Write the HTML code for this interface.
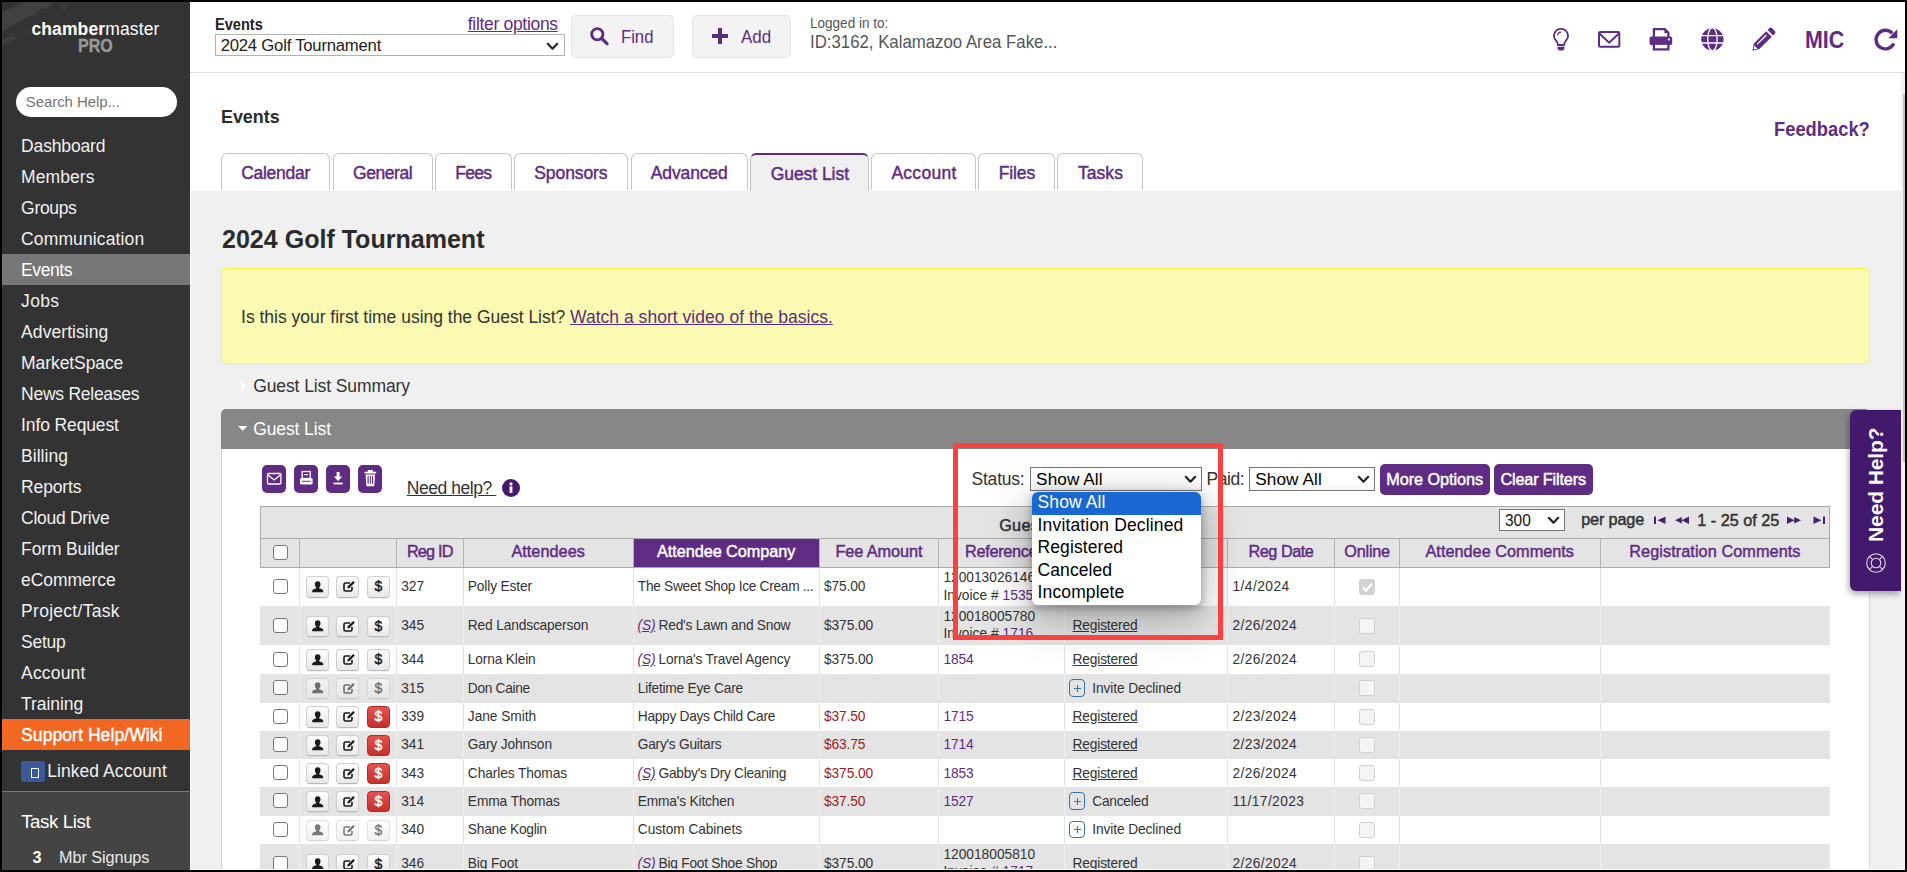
<!DOCTYPE html>
<html lang="en">
<head>
<meta charset="utf-8">
<title>Events - Guest List</title>
<style>
*{box-sizing:border-box;margin:0;padding:0}
html,body{width:1907px;height:872px;overflow:hidden;background:#000;font-family:"Liberation Sans",sans-serif;color:#333}
#frame{position:absolute;left:2px;top:2px;width:1903px;height:868px;background:#f0f0f0;overflow:hidden}
.t{position:absolute;white-space:nowrap}
a{color:#5f2c83}
u{text-decoration:underline}
svg{position:absolute;overflow:visible}
</style>
</head>
<body>
<div id="frame">

<!-- sidebar -->
<div id="side"><div style="position:absolute;left:0px;top:0px;width:188px;height:868px;background:#333"></div>
<svg style="left:0;top:0" width="188" height="80" viewBox="0 0 188 80"><g fill="#414141"><path d="M22 0h31l-9 7l-4-1l-7 7l-5 1l-28 15v-19l14-6z"/><path d="M0 37l11-3l3 3l-14 6z" opacity=".8"/><path d="M60 3l4-1l0 5l-2 3l-2-4z" opacity=".6"/><path d="M53 13l4-2l-3 3z M22 31l5-3l-4 4z" opacity=".5"/></g></svg>
<span class="t" style="left:29.4px;top:16.0px;font-size:17.5px;line-height:22px;color:#fff;letter-spacing:0.125px;"><b>chamber</b>master</span>
<span class="t" style="left:76.2px;top:33.0px;font-size:18px;line-height:22px;font-weight:bold;color:#999;transform:scaleX(0.8920);transform-origin:0 0;-webkit-text-stroke:0.35px #999;">PRO</span>
<div style="position:absolute;left:13.5px;top:84.6px;width:161px;height:30.8px;background:#fff;border-radius:16px"></div>
<span class="t" style="left:23.8px;top:90.0px;font-size:15px;line-height:19px;color:#757575;letter-spacing:-0.078px;">Search Help...</span>
<span class="t" style="left:19.1px;top:133.0px;font-size:17.5px;line-height:22px;color:#f0f0f0;letter-spacing:-0.156px;">Dashboard</span>
<span class="t" style="left:19.1px;top:164.0px;font-size:17.5px;line-height:22px;color:#f0f0f0;letter-spacing:0.071px;">Members</span>
<span class="t" style="left:19.1px;top:195.0px;font-size:17.5px;line-height:22px;color:#f0f0f0;letter-spacing:-0.326px;">Groups</span>
<span class="t" style="left:19.1px;top:226.0px;font-size:17.5px;line-height:22px;color:#f0f0f0;letter-spacing:0.122px;">Communication</span>
<div style="position:absolute;left:0px;top:252px;width:188px;height:31px;background:#777"></div>
<span class="t" style="left:19.1px;top:257.0px;font-size:17.5px;line-height:22px;color:#fff;letter-spacing:-0.418px;">Events</span>
<span class="t" style="left:19.1px;top:288.0px;font-size:17.5px;line-height:22px;color:#f0f0f0;letter-spacing:0.323px;">Jobs</span>
<span class="t" style="left:19.1px;top:319.0px;font-size:17.5px;line-height:22px;color:#f0f0f0;letter-spacing:0.069px;">Advertising</span>
<span class="t" style="left:19.1px;top:350.0px;font-size:17.5px;line-height:22px;color:#f0f0f0;letter-spacing:-0.087px;">MarketSpace</span>
<span class="t" style="left:19.1px;top:381.0px;font-size:17.5px;line-height:22px;color:#f0f0f0;letter-spacing:-0.262px;">News Releases</span>
<span class="t" style="left:19.1px;top:412.0px;font-size:17.5px;line-height:22px;color:#f0f0f0;letter-spacing:-0.125px;">Info Request</span>
<span class="t" style="left:19.1px;top:443.0px;font-size:17.5px;line-height:22px;color:#f0f0f0;letter-spacing:0.015px;">Billing</span>
<span class="t" style="left:19.1px;top:474.0px;font-size:17.5px;line-height:22px;color:#f0f0f0;letter-spacing:-0.151px;">Reports</span>
<span class="t" style="left:19.1px;top:505.0px;font-size:17.5px;line-height:22px;color:#f0f0f0;letter-spacing:-0.289px;">Cloud Drive</span>
<span class="t" style="left:19.1px;top:536.0px;font-size:17.5px;line-height:22px;color:#f0f0f0;letter-spacing:-0.145px;">Form Builder</span>
<span class="t" style="left:19.1px;top:567.0px;font-size:17.5px;line-height:22px;color:#f0f0f0;letter-spacing:-0.096px;">eCommerce</span>
<span class="t" style="left:19.1px;top:598.0px;font-size:17.5px;line-height:22px;color:#f0f0f0;letter-spacing:0.277px;">Project/Task</span>
<span class="t" style="left:19.1px;top:629.0px;font-size:17.5px;line-height:22px;color:#f0f0f0;letter-spacing:-0.252px;">Setup</span>
<span class="t" style="left:19.1px;top:660.0px;font-size:17.5px;line-height:22px;color:#f0f0f0;letter-spacing:0.164px;">Account</span>
<span class="t" style="left:19.1px;top:691.0px;font-size:17.5px;line-height:22px;color:#f0f0f0;letter-spacing:-0.064px;">Training</span>
<div style="position:absolute;left:0px;top:717px;width:188px;height:31px;background:#f26722"></div>
<span class="t" style="left:19.1px;top:722.0px;font-size:17.5px;line-height:22px;-webkit-text-stroke:0.45px;color:#fff;letter-spacing:0.081px;">Support Help/Wiki</span>
<div style="position:absolute;left:19px;top:758.8px;width:24px;height:20.8px;background:#3b5998;border-radius:3px"></div>
<div style="position:absolute;left:29px;top:766px;width:8.4px;height:9.6px;border:1px solid #fff"></div>
<span class="t" style="left:45.2px;top:758.0px;font-size:17.5px;line-height:22px;color:#f0f0f0;letter-spacing:0.066px;">Linked Account</span>
<div style="position:absolute;left:0px;top:789px;width:188px;height:79px;background:#444;border-top:1px solid #7a7a7a"></div>
<span class="t" style="left:19.2px;top:808.0px;font-size:18.75px;line-height:23px;color:#fff;letter-spacing:-0.442px;">Task List</span>
<span class="t" style="left:30.6px;top:845.0px;font-size:16.25px;line-height:20px;font-weight:bold;color:#fff;letter-spacing:0.553px;">3</span>
<span class="t" style="left:57.0px;top:845.0px;font-size:16.25px;line-height:20px;color:#e8e8e8;letter-spacing:-0.079px;">Mbr Signups</span></div>

<!-- top bar -->
<div id="top"><div style="position:absolute;left:188px;top:0px;width:1715px;height:71px;background:#fff;border-bottom:1px solid #ddd"></div>
<span class="t" style="left:213.0px;top:12.0px;font-size:16.25px;line-height:20px;font-weight:bold;color:#222;transform:scaleX(0.8969);transform-origin:0 0;">Events</span>
<span class="t" style="left:465.8px;top:11.0px;font-size:17.5px;line-height:22px;color:#5f2c83;letter-spacing:-0.316px;"><u>filter options</u></span>
<div style="position:absolute;left:213px;top:32px;width:350px;height:22px;background:#fff;border:1px solid #b2b2b2"></div>
<span class="t" style="left:218.7px;top:33.0px;font-size:16.67px;line-height:21px;color:#222;letter-spacing:-0.206px;">2024 Golf Tournament</span>
<svg style="left:545.3px;top:40.5px" width="11" height="6.5" viewBox="0 0 11 6.5"><path d="M0.8 0.8L5.5 5.7L10.2 0.8" fill="none" stroke="#222" stroke-width="2.2" stroke-linecap="round" stroke-linejoin="round"/></svg>
<div style="position:absolute;left:569.2px;top:13px;width:102.6px;height:42.6px;background:#f3f3f3;border:1px solid #e5e5e5;border-radius:5px"></div>
<svg style="left:588px;top:25px" width="19" height="18" viewBox="0 0 19 18"><circle cx="7.3" cy="7.3" r="5.6" fill="none" stroke="#5f2c83" stroke-width="2.8"/><path d="M11.6 11.4L17 16.6" stroke="#5f2c83" stroke-width="3.4" stroke-linecap="round"/></svg>
<span class="t" style="left:619.3px;top:24.0px;font-size:18px;line-height:22px;color:#5f2c83;transform:scaleX(0.9253);transform-origin:0 0;">Find</span>
<div style="position:absolute;left:690.3px;top:13px;width:98.5px;height:42.6px;background:#f3f3f3;border:1px solid #e5e5e5;border-radius:5px"></div>
<svg style="left:710.2px;top:26px" width="16" height="16" viewBox="0 0 16 16"><path d="M8 0v16M0 8h16" stroke="#5f2c83" stroke-width="4" fill="none"/></svg>
<span class="t" style="left:738.6px;top:24.0px;font-size:18px;line-height:22px;color:#5f2c83;transform:scaleX(0.9428);transform-origin:0 0;">Add</span>
<span class="t" style="left:808.3px;top:11.0px;font-size:15px;line-height:19px;color:#555;transform:scaleX(0.9026);transform-origin:0 0;">Logged in to:</span>
<span class="t" style="left:808.3px;top:28.0px;font-size:18.75px;line-height:23px;color:#555;transform:scaleX(0.8957);transform-origin:0 0;">ID:3162, Kalamazoo Area Fake...</span>
<svg style="left:1550px;top:25px" width="18" height="24" viewBox="0 0 18 24"><path d="M9 1.900a6.900 6.900 0 0 0-4.900 11.800c1.100 1.200 1.700 2.600 1.800 4.300h6.200c.1-1.700.7-3.100 1.800-4.300A6.900 6.900 0 0 0 9 1.900z" fill="none" stroke="#5f2c83" stroke-width="1.800"/><path d="M5.500 19.800h7v1.100c0 1.500-1.100 2.600-2.500 2.600h-2c-1.400 0-2.500-1.100-2.500-2.600z" fill="#5f2c83"/><path d="M5.700 8.600A3.500 3.500 0 0 1 9 5.100" fill="none" stroke="#5f2c83" stroke-width="1.100"/></svg>
<svg style="left:1596px;top:29.1px" width="23" height="17" viewBox="0 0 23 17"><rect x="1" y="1" width="20.300" height="14.700" rx="1.300" fill="none" stroke="#5f2c83" stroke-width="2"/><path d="M1.400 2.600L11.150 11.700L20.900 2.600" fill="none" stroke="#5f2c83" stroke-width="2"/></svg>
<svg style="left:1647px;top:25px" width="24" height="24" viewBox="0 0 24 24"><path d="M4.900 10.500V2.100h10.900l3.600 3.600v4.800" fill="none" stroke="#5f2c83" stroke-width="2.300"/><path d="M15.400 1.500v4.600h4.600z" fill="#5f2c83"/><rect x="0.600" y="9.400" width="22.600" height="8.600" rx="1.700" fill="#5f2c83"/><rect x="4.900" y="16.700" width="14.500" height="5.700" fill="#fff" stroke="#5f2c83" stroke-width="2.300"/><circle cx="19.900" cy="12.400" r="1.050" fill="#fff"/></svg>
<svg style="left:1699px;top:26px" width="23" height="23" viewBox="0 0 23 23"><circle cx="11.400" cy="11.300" r="11.150" fill="#5f2c83"/><g fill="none" stroke="#fff" stroke-width="1.300"><ellipse cx="11.400" cy="11.300" rx="4.700" ry="11.600"/><path d="M0 7.700h23M0 15h23"/></g></svg>
<svg style="left:1749.6px;top:25.4px" width="24" height="24" viewBox="0 0 24 24"><path d="M17.300 1.200a2 2 0 0 1 2.800 0l2.700 2.700a2 2 0 0 1 0 2.800l-1.700 1.700l-5.500-5.500z" fill="#5f2c83"/><path d="M14.200 4.300l5.500 5.500l-12.300 12.300l-7 1.600l1.500-7.100z" fill="#5f2c83"/><path d="M2.300 18.600l3.200 3.100l-3.800.8z" fill="#fff"/><path d="M5 17.400l9.400-9.400" stroke="#fff" stroke-width="1.200"/></svg>
<span class="t" style="left:1803.4px;top:24.0px;font-size:23.2px;line-height:29px;font-weight:bold;color:#5f2c83;transform:scaleX(0.9244);transform-origin:0 0;">MIC</span>
<svg style="left:1872px;top:26.4px" width="24" height="23" viewBox="0 0 24 23"><path d="M19.800 15.600A9.300 9.300 0 1 1 18.300 5.300" fill="none" stroke="#5f2c83" stroke-width="3.400"/><path d="M23.300 1.200v9h-9z" fill="#5f2c83"/></svg></div>

<!-- main -->
<div id="main"><div style="position:absolute;left:188px;top:71px;width:1711px;height:118px;background:#fff"></div>
<span class="t" style="left:219.4px;top:103.0px;font-size:19.25px;line-height:24px;font-weight:bold;color:#2b2b2b;transform:scaleX(0.9281);transform-origin:0 0;">Events</span>
<span class="t" style="left:1771.5px;top:115.0px;font-size:19.6px;line-height:24px;font-weight:bold;color:#5f2c83;transform:scaleX(0.9358);transform-origin:0 0;">Feedback?</span>
<div style="position:absolute;left:219px;top:151px;width:109px;height:37px;background:#fff;border:1px solid #c6c6c6;border-bottom:none;border-radius:6px 6px 0 0"></div>
<span class="t" style="left:239.2px;top:160.0px;font-size:17.5px;line-height:22px;-webkit-text-stroke:0.45px;color:#5f2c83;letter-spacing:-0.284px;">Calendar</span>
<div style="position:absolute;left:331px;top:151px;width:100px;height:37px;background:#fff;border:1px solid #c6c6c6;border-bottom:none;border-radius:6px 6px 0 0"></div>
<span class="t" style="left:351.0px;top:160.0px;font-size:17.5px;line-height:22px;-webkit-text-stroke:0.45px;color:#5f2c83;letter-spacing:-0.441px;">General</span>
<div style="position:absolute;left:433px;top:151px;width:77px;height:37px;background:#fff;border:1px solid #c6c6c6;border-bottom:none;border-radius:6px 6px 0 0"></div>
<span class="t" style="left:453.2px;top:160.0px;font-size:17.5px;line-height:22px;-webkit-text-stroke:0.45px;color:#5f2c83;letter-spacing:-0.688px;">Fees</span>
<div style="position:absolute;left:512px;top:151px;width:114px;height:37px;background:#fff;border:1px solid #c6c6c6;border-bottom:none;border-radius:6px 6px 0 0"></div>
<span class="t" style="left:532.3px;top:160.0px;font-size:17.5px;line-height:22px;-webkit-text-stroke:0.45px;color:#5f2c83;letter-spacing:-0.098px;">Sponsors</span>
<div style="position:absolute;left:629px;top:151px;width:117px;height:37px;background:#fff;border:1px solid #c6c6c6;border-bottom:none;border-radius:6px 6px 0 0"></div>
<span class="t" style="left:648.8px;top:160.0px;font-size:17.5px;line-height:22px;-webkit-text-stroke:0.45px;color:#5f2c83;letter-spacing:-0.139px;">Advanced</span>
<div style="position:absolute;left:748px;top:151px;width:119px;height:38px;background:#f0f0f0;border:1px solid #c4c4c4;border-top:2px solid #5f2c83;border-bottom:none;border-radius:6px 6px 0 0"></div>
<span class="t" style="left:768.7px;top:161.0px;font-size:17.5px;line-height:22px;-webkit-text-stroke:0.45px;color:#5f2c83;letter-spacing:-0.052px;">Guest List</span>
<div style="position:absolute;left:869px;top:151px;width:105px;height:37px;background:#fff;border:1px solid #c6c6c6;border-bottom:none;border-radius:6px 6px 0 0"></div>
<span class="t" style="left:889.4px;top:160.0px;font-size:17.5px;line-height:22px;-webkit-text-stroke:0.45px;color:#5f2c83;letter-spacing:0.272px;">Account</span>
<div style="position:absolute;left:976px;top:151px;width:77px;height:37px;background:#fff;border:1px solid #c6c6c6;border-bottom:none;border-radius:6px 6px 0 0"></div>
<span class="t" style="left:996.7px;top:160.0px;font-size:17.5px;line-height:22px;-webkit-text-stroke:0.45px;color:#5f2c83;letter-spacing:-0.101px;">Files</span>
<div style="position:absolute;left:1055px;top:151px;width:86px;height:37px;background:#fff;border:1px solid #c6c6c6;border-bottom:none;border-radius:6px 6px 0 0"></div>
<span class="t" style="left:1075.9px;top:160.0px;font-size:17.5px;line-height:22px;-webkit-text-stroke:0.45px;color:#5f2c83;letter-spacing:0.081px;">Tasks</span>
<span class="t" style="left:219.6px;top:221.0px;font-size:26.25px;line-height:33px;font-weight:bold;color:#2b2b2b;transform:scaleX(0.9538);transform-origin:0 0;">2024 Golf Tournament</span>
<div style="position:absolute;left:219px;top:266px;width:1649px;height:96px;background:#fafab2;border:1px solid #f7f748;border-radius:5px"></div>
<span class="t" style="left:239.1px;top:304.0px;font-size:17.5px;line-height:22px;letter-spacing:-0.015px;">Is this your first time using the Guest List?</span>
<span class="t" style="left:568.0px;top:304.0px;font-size:17.5px;line-height:22px;color:#5f2c83;letter-spacing:0.027px;"><u>Watch a short video of the basics.</u></span>
<svg style="left:239.4px;top:379px" width="6" height="10" viewBox="0 0 6 10"><path d="M0 0l5 5l-5 5z" fill="#fff"/></svg>
<span class="t" style="left:251.2px;top:373.0px;font-size:17.5px;line-height:22px;letter-spacing:-0.099px;">Guest List Summary</span>
<div style="position:absolute;left:219px;top:407px;width:1649px;height:40px;background:#878787;border-radius:5px 5px 0 0"></div>
<div style="position:absolute;left:219px;top:446.8px;width:1649px;height:423.2px;background:#fff;border-right:1px solid #d8d8d8;border-left:1px solid #d0d0d0"></div>
<svg style="left:235.8px;top:423.8px" width="10" height="5" viewBox="0 0 10 5"><path d="M0 0h9.400l-4.700 4.800z" fill="#fff"/></svg>
<span class="t" style="left:251.2px;top:416.0px;font-size:17.5px;line-height:22px;color:#fff;letter-spacing:-0.105px;">Guest List</span>
<div style="position:absolute;left:260px;top:463px;width:24.2px;height:28px;background:#5f2c83;border-radius:5px"><svg style="left:0;top:0" width="24" height="28" viewBox="0 0 24 28"><rect x="5.500" y="8.500" width="13.400" height="10.500" rx="1" fill="none" stroke="#fff" stroke-width="1.300"/><path d="M6 10l6.200 5l6.200-5" fill="none" stroke="#fff" stroke-width="1.300"/></svg></div>
<div style="position:absolute;left:292.2px;top:463px;width:24.2px;height:28px;background:#5f2c83;border-radius:5px"><svg style="left:0;top:0" width="24" height="28" viewBox="0 0 24 28"><rect x="8.200" y="6.500" width="8" height="7" fill="none" stroke="#fff" stroke-width="1.300"/><path d="M10.300 9.600h3.800" stroke="#fff" stroke-width="1.200"/><rect x="6" y="13" width="12.600" height="6.600" rx="1.500" fill="#fff"/><path d="M8 16.300h8.600" stroke="#5f2c83" stroke-width="1"/></svg></div>
<div style="position:absolute;left:324px;top:463px;width:24.2px;height:28px;background:#5f2c83;border-radius:5px"><svg style="left:0;top:0" width="24" height="28" viewBox="0 0 24 28"><path d="M10.600 7h3v4.600h2.800l-4.300 4.500l-4.300-4.500h2.800z" fill="#fff"/><rect x="7.500" y="17.600" width="9.200" height="1.800" fill="#fff"/></svg></div>
<div style="position:absolute;left:356.2px;top:463px;width:24.2px;height:28px;background:#5f2c83;border-radius:5px"><svg style="left:0;top:0" width="24" height="28" viewBox="0 0 24 28"><path d="M6.500 6.800h11.600v1.600h-11.600zM9.800 5h5v1.800h-5z" fill="#fff"/><path d="M7.600 9.600h9.400l-.7 10.800a1 1 0 0 1-1 .9h-6a1 1 0 0 1-1-.9z" fill="#fff"/><path d="M10.100 11v7.800M12.300 11v7.800M14.500 11v7.800" stroke="#5f2c83" stroke-width="1.100"/></svg></div>
<span class="t" style="left:404.7px;top:475.0px;font-size:17.5px;line-height:22px;letter-spacing:-0.428px;"><u>Need help?&nbsp;</u></span>
<svg style="left:500.1px;top:476.8px" width="18" height="18" viewBox="0 0 18 18"><circle cx="9" cy="9" r="9" fill="#471a6e"/><rect x="7.600" y="7.300" width="2.800" height="6.600" fill="#fff"/><circle cx="9" cy="4.800" r="1.600" fill="#fff"/></svg>
<span class="t" style="left:969.5px;top:466.0px;font-size:17.5px;line-height:22px;letter-spacing:-0.213px;">Status:</span>
<div style="position:absolute;left:1028.2px;top:465.3px;width:171.5px;height:23.5px;background:linear-gradient(#fff 60%,#f6f6f6);border:1px solid #767676"></div>
<span class="t" style="left:1034.1px;top:466.0px;font-size:17.2px;line-height:22px;color:#000;letter-spacing:0.077px;">Show All</span>
<svg style="left:1182.5px;top:474px" width="11" height="6.5" viewBox="0 0 11 6.5"><path d="M0.8 0.8L5.5 5.7L10.2 0.8" fill="none" stroke="#222" stroke-width="2.2" stroke-linecap="round" stroke-linejoin="round"/></svg>
<span class="t" style="left:1204.5px;top:466.0px;font-size:17.5px;line-height:22px;letter-spacing:-0.465px;">Paid:</span>
<div style="position:absolute;left:1247.1px;top:465.3px;width:125.6px;height:23.5px;background:linear-gradient(#fff 60%,#f6f6f6);border:1px solid #767676"></div>
<span class="t" style="left:1253.3px;top:466.0px;font-size:17.2px;line-height:22px;color:#000;letter-spacing:0.077px;">Show All</span>
<svg style="left:1355.5px;top:474px" width="11" height="6.5" viewBox="0 0 11 6.5"><path d="M0.8 0.8L5.5 5.7L10.2 0.8" fill="none" stroke="#222" stroke-width="2.2" stroke-linecap="round" stroke-linejoin="round"/></svg>
<div style="position:absolute;left:1377.9px;top:462px;width:110px;height:30.8px;background:#5f2c83;border-radius:5px"></div>
<span class="t" style="left:1384.2px;top:467.0px;font-size:16.25px;line-height:20px;-webkit-text-stroke:0.45px;color:#fff;letter-spacing:-0.048px;">More Options</span>
<div style="position:absolute;left:1492.1px;top:462px;width:98.6px;height:30.8px;background:#5f2c83;border-radius:5px"></div>
<span class="t" style="left:1498.4px;top:467.0px;font-size:16.25px;line-height:20px;-webkit-text-stroke:0.45px;color:#fff;letter-spacing:-0.160px;">Clear Filters</span></div>

<!-- table -->
<div id="grid"><div style="position:absolute;left:258.2px;top:504px;width:1569.4px;height:32.4px;background:#e4e4e4;border:1px solid #aaa;border-bottom:none"></div>
<span class="t" style="left:997.2px;top:513.0px;font-size:16.25px;line-height:20px;-webkit-text-stroke:0.45px;letter-spacing:0.277px;">Guest List</span>
<div style="position:absolute;left:1497px;top:507px;width:66px;height:22px;background:#fff;border:1px solid #767676"></div>
<span class="t" style="left:1503.2px;top:508.0px;font-size:16.67px;line-height:21px;color:#111;transform:scaleX(0.9282);transform-origin:0 0;">300</span>
<svg style="left:1545.6px;top:515.2px" width="11" height="6.5" viewBox="0 0 11 6.5"><path d="M0.8 0.8L5.5 5.7L10.2 0.8" fill="none" stroke="#222" stroke-width="2.2" stroke-linecap="round" stroke-linejoin="round"/></svg>
<span class="t" style="left:1579.2px;top:507.0px;font-size:16.25px;line-height:20px;-webkit-text-stroke:0.45px;letter-spacing:-0.154px;">per page</span>
<svg style="left:1651.6px;top:513.6px" width="12" height="9" viewBox="0 0 12 9"><rect x="0" y="0.500" width="2" height="7.500" fill="#48206e"/><path d="M11.500 0.500v7.500L3.500 4.250z" fill="#48206e"/></svg>
<svg style="left:1673.2px;top:513.6px" width="14" height="9" viewBox="0 0 14 9"><path d="M6.800 1v6.500L0 4.250zM14 0.500v7.500L6.500 4.250z" fill="#48206e"/></svg>
<span class="t" style="left:1695.3px;top:508.0px;font-size:16.25px;line-height:20px;-webkit-text-stroke:0.45px;letter-spacing:-0.019px;">1 - 25 of 25</span>
<svg style="left:1785.4px;top:513.6px" width="14" height="9" viewBox="0 0 14 9"><path d="M7.200 1v6.500L14 4.250zM0 0.500v7.500L7.500 4.250z" fill="#48206e"/></svg>
<svg style="left:1810.5px;top:513.6px" width="12" height="9" viewBox="0 0 12 9"><rect x="10" y="0.500" width="2" height="7.500" fill="#48206e"/><path d="M0.500 0.500v7.500L8.500 4.250z" fill="#48206e"/></svg>
<div style="position:absolute;left:258.2px;top:536.4px;width:1569.4px;height:29.2px;background:#e4e4e4;border:1px solid #aaa"></div>
<div style="position:absolute;left:296.8px;top:537px;width:1px;height:28px;background:#b4b4b4"></div>
<div style="position:absolute;left:393.9px;top:537px;width:1px;height:28px;background:#b4b4b4"></div>
<div style="position:absolute;left:460.9px;top:537px;width:1px;height:28px;background:#b4b4b4"></div>
<div style="position:absolute;left:631.3px;top:537px;width:1px;height:28px;background:#b4b4b4"></div>
<div style="position:absolute;left:816.6px;top:537px;width:1px;height:28px;background:#b4b4b4"></div>
<div style="position:absolute;left:936px;top:537px;width:1px;height:28px;background:#b4b4b4"></div>
<div style="position:absolute;left:1061.9px;top:537px;width:1px;height:28px;background:#b4b4b4"></div>
<div style="position:absolute;left:1225px;top:537px;width:1px;height:28px;background:#b4b4b4"></div>
<div style="position:absolute;left:1332.1px;top:537px;width:1px;height:28px;background:#b4b4b4"></div>
<div style="position:absolute;left:1397px;top:537px;width:1px;height:28px;background:#b4b4b4"></div>
<div style="position:absolute;left:1597.9px;top:537px;width:1px;height:28px;background:#b4b4b4"></div>
<div style="position:absolute;left:631.8px;top:537.2px;width:185.4px;height:27.6px;background:#5f2c83"></div>
<div style="position:absolute;left:271px;top:543px;width:15px;height:15px;background:#fff;border:1.400px solid #777;border-radius:3px"></div>
<span class="t" style="left:404.9px;top:539.0px;font-size:16.25px;line-height:20px;-webkit-text-stroke:0.45px;color:#5f2c83;letter-spacing:-0.796px;">Reg ID</span>
<span class="t" style="left:509.4px;top:539.0px;font-size:16.25px;line-height:20px;-webkit-text-stroke:0.45px;color:#5f2c83;letter-spacing:0.037px;">Attendees</span>
<span class="t" style="left:833.5px;top:539.0px;font-size:16.25px;line-height:20px;-webkit-text-stroke:0.45px;color:#5f2c83;letter-spacing:-0.076px;">Fee Amount</span>
<span class="t" style="left:963.0px;top:539.0px;font-size:16.25px;line-height:20px;-webkit-text-stroke:0.45px;color:#5f2c83;letter-spacing:-0.292px;">Reference</span>
<span class="t" style="left:1120.0px;top:539.0px;font-size:16.25px;line-height:20px;-webkit-text-stroke:0.45px;color:#5f2c83;letter-spacing:0.349px;">Status</span>
<span class="t" style="left:1246.5px;top:539.0px;font-size:16.25px;line-height:20px;-webkit-text-stroke:0.45px;color:#5f2c83;letter-spacing:-0.487px;">Reg Date</span>
<span class="t" style="left:1342.3px;top:539.0px;font-size:16.25px;line-height:20px;-webkit-text-stroke:0.45px;color:#5f2c83;letter-spacing:-0.234px;">Online</span>
<span class="t" style="left:1423.5px;top:539.0px;font-size:16.25px;line-height:20px;-webkit-text-stroke:0.45px;color:#5f2c83;letter-spacing:0.022px;">Attendee Comments</span>
<span class="t" style="left:1627.3px;top:539.0px;font-size:16.25px;line-height:20px;-webkit-text-stroke:0.45px;color:#5f2c83;letter-spacing:0.068px;">Registration Comments</span>
<span class="t" style="left:654.9px;top:539.0px;font-size:16.25px;line-height:20px;-webkit-text-stroke:0.45px;color:#fff;letter-spacing:-0.040px;">Attendee Company</span>
<div style="position:absolute;left:258.2px;top:566px;width:1569.4px;height:38px;background:#fff"></div>
<div style="position:absolute;left:296.8px;top:566px;width:1px;height:38px;background:#e2e2e2"></div>
<div style="position:absolute;left:393.9px;top:566px;width:1px;height:38px;background:#e2e2e2"></div>
<div style="position:absolute;left:460.9px;top:566px;width:1px;height:38px;background:#e2e2e2"></div>
<div style="position:absolute;left:631.3px;top:566px;width:1px;height:38px;background:#e2e2e2"></div>
<div style="position:absolute;left:816.6px;top:566px;width:1px;height:38px;background:#e2e2e2"></div>
<div style="position:absolute;left:936px;top:566px;width:1px;height:38px;background:#e2e2e2"></div>
<div style="position:absolute;left:1061.9px;top:566px;width:1px;height:38px;background:#e2e2e2"></div>
<div style="position:absolute;left:1225px;top:566px;width:1px;height:38px;background:#e2e2e2"></div>
<div style="position:absolute;left:1332.1px;top:566px;width:1px;height:38px;background:#e2e2e2"></div>
<div style="position:absolute;left:1397px;top:566px;width:1px;height:38px;background:#e2e2e2"></div>
<div style="position:absolute;left:1597.9px;top:566px;width:1px;height:38px;background:#e2e2e2"></div>
<div style="position:absolute;left:271px;top:577px;width:15px;height:15px;background:#fff;border:1.400px solid #777;border-radius:3px"></div>
<div style="position:absolute;left:304.2px;top:574.4px;width:22.4px;height:21.4px;background:linear-gradient(#fdfdfd,#e8e8e8);border:1px solid #cfcfcf;border-bottom-color:#b8b8b8;border-radius:4px;box-shadow:0 1px 1px rgba(0,0,0,.06);"><svg style="left:5.100px;top:3.600px" width="11.400" height="11.400" viewBox="0 0 11 11"><path d="M5.500 0.200c1.700 0 2.700 1.200 2.700 2.900c0 1.300-.6 2.500-1.300 3.100v.7c1.800.6 3.600 1.300 3.900 2.300v1.600h-10.600v-1.600c.3-1 2.100-1.700 3.900-2.300v-.7c-.7-.6-1.300-1.800-1.300-3.100c0-1.700 1-2.900 2.700-2.900z" fill="#1a1a1a"/></svg></div>
<div style="position:absolute;left:334.2px;top:574.4px;width:23.3px;height:21.4px;background:linear-gradient(#fdfdfd,#e8e8e8);border:1px solid #cfcfcf;border-bottom-color:#b8b8b8;border-radius:4px;box-shadow:0 1px 1px rgba(0,0,0,.06);"><svg style="left:5.400px;top:4px" width="12" height="11" viewBox="0 0 12 11"><path d="M7 2h-4.500a1.500 1.500 0 0 0-1.500 1.500v5a1.500 1.500 0 0 0 1.500 1.500h5a1.500 1.500 0 0 0 1.500-1.500v-2.500" fill="none" stroke="#1a1a1a" stroke-width="1.600"/><path d="M10.200 0l1.600 1.600l-5.300 5.300l-2.200.6l.6-2.200z" fill="#1a1a1a"/></svg></div>
<div style="position:absolute;left:365.3px;top:574.4px;width:22.4px;height:21.4px;background:linear-gradient(#fdfdfd,#e8e8e8);border:1px solid #cfcfcf;border-bottom-color:#b8b8b8;border-radius:4px;box-shadow:0 1px 1px rgba(0,0,0,.06);"><span style="position:absolute;left:0;top:0;width:100%;text-align:center;font-size:14px;line-height:19px;-webkit-text-stroke:0.4px;color:#1a1a1a">$</span></div>
<span class="t" style="left:399.3px;top:576.0px;font-size:13.75px;line-height:17px;letter-spacing:-0.101px;">327</span>
<span class="t" style="left:465.8px;top:576.0px;font-size:13.75px;line-height:17px;letter-spacing:-0.145px;">Polly Ester</span>
<span class="t" style="left:635.8px;top:576.0px;font-size:13.75px;line-height:17px;letter-spacing:-0.309px;">The Sweet Shop Ice Cream ...</span>
<span class="t" style="left:822.0px;top:576.0px;font-size:13.75px;line-height:17px;letter-spacing:-0.139px;">$75.00</span>
<span class="t" style="left:941.4px;top:567.0px;font-size:13.75px;line-height:17px;letter-spacing:-0.006px;">120013026146</span>
<span class="t" style="left:941.4px;top:585.0px;font-size:13.75px;line-height:17px;letter-spacing:0.033px;">Invoice # <span style="color:#5f2c83">1535</span></span>
<span class="t" style="left:1070.5px;top:576.0px;font-size:13.75px;line-height:17px;letter-spacing:-0.158px;"><u>Registered</u></span>
<span class="t" style="left:1230.4px;top:576.0px;font-size:13.75px;line-height:17px;letter-spacing:0.463px;">1/4/2024</span>
<div style="position:absolute;left:1357.2px;top:577px;width:15.6px;height:15.6px;background:#d2d2d2;border:1px solid #d2d2d2;border-radius:2.500px"><svg style="left:0;top:0" width="14" height="14" viewBox="0 0 14 14"><path d="M3 7.600l3 3l5.800-7" fill="none" stroke="#fff" stroke-width="2.200"/></svg></div>
<div style="position:absolute;left:258.2px;top:604px;width:1569.4px;height:39.4px;background:#e4e4e4"></div>
<div style="position:absolute;left:296.8px;top:604px;width:1px;height:39.4px;background:#efefef"></div>
<div style="position:absolute;left:393.9px;top:604px;width:1px;height:39.4px;background:#efefef"></div>
<div style="position:absolute;left:460.9px;top:604px;width:1px;height:39.4px;background:#efefef"></div>
<div style="position:absolute;left:631.3px;top:604px;width:1px;height:39.4px;background:#efefef"></div>
<div style="position:absolute;left:816.6px;top:604px;width:1px;height:39.4px;background:#efefef"></div>
<div style="position:absolute;left:936px;top:604px;width:1px;height:39.4px;background:#efefef"></div>
<div style="position:absolute;left:1061.9px;top:604px;width:1px;height:39.4px;background:#efefef"></div>
<div style="position:absolute;left:1225px;top:604px;width:1px;height:39.4px;background:#efefef"></div>
<div style="position:absolute;left:1332.1px;top:604px;width:1px;height:39.4px;background:#efefef"></div>
<div style="position:absolute;left:1397px;top:604px;width:1px;height:39.4px;background:#efefef"></div>
<div style="position:absolute;left:1597.9px;top:604px;width:1px;height:39.4px;background:#efefef"></div>
<div style="position:absolute;left:271px;top:616px;width:15px;height:15px;background:#fff;border:1.400px solid #777;border-radius:3px"></div>
<div style="position:absolute;left:304.2px;top:613.9px;width:22.4px;height:21.4px;background:linear-gradient(#fdfdfd,#e8e8e8);border:1px solid #cfcfcf;border-bottom-color:#b8b8b8;border-radius:4px;box-shadow:0 1px 1px rgba(0,0,0,.06);"><svg style="left:5.100px;top:3.600px" width="11.400" height="11.400" viewBox="0 0 11 11"><path d="M5.500 0.200c1.700 0 2.700 1.200 2.700 2.900c0 1.300-.6 2.500-1.300 3.100v.7c1.800.6 3.600 1.300 3.900 2.300v1.600h-10.600v-1.600c.3-1 2.100-1.700 3.900-2.300v-.7c-.7-.6-1.300-1.800-1.300-3.100c0-1.700 1-2.900 2.700-2.900z" fill="#1a1a1a"/></svg></div>
<div style="position:absolute;left:334.2px;top:613.9px;width:23.3px;height:21.4px;background:linear-gradient(#fdfdfd,#e8e8e8);border:1px solid #cfcfcf;border-bottom-color:#b8b8b8;border-radius:4px;box-shadow:0 1px 1px rgba(0,0,0,.06);"><svg style="left:5.400px;top:4px" width="12" height="11" viewBox="0 0 12 11"><path d="M7 2h-4.500a1.500 1.500 0 0 0-1.500 1.500v5a1.500 1.500 0 0 0 1.500 1.500h5a1.500 1.500 0 0 0 1.500-1.500v-2.500" fill="none" stroke="#1a1a1a" stroke-width="1.600"/><path d="M10.200 0l1.600 1.600l-5.300 5.300l-2.200.6l.6-2.200z" fill="#1a1a1a"/></svg></div>
<div style="position:absolute;left:365.3px;top:613.9px;width:22.4px;height:21.4px;background:linear-gradient(#fdfdfd,#e8e8e8);border:1px solid #cfcfcf;border-bottom-color:#b8b8b8;border-radius:4px;box-shadow:0 1px 1px rgba(0,0,0,.06);"><span style="position:absolute;left:0;top:0;width:100%;text-align:center;font-size:14px;line-height:19px;-webkit-text-stroke:0.4px;color:#1a1a1a">$</span></div>
<span class="t" style="left:399.3px;top:615.0px;font-size:13.75px;line-height:17px;letter-spacing:-0.101px;">345</span>
<span class="t" style="left:465.8px;top:615.0px;font-size:13.75px;line-height:17px;letter-spacing:-0.156px;">Red Landscaperson</span>
<span class="t" style="left:635.6px;top:615.0px;font-size:13.75px;line-height:17px;letter-spacing:-0.218px;"><i style="color:#5f2c83"><u>(S)</u></i></span>
<span class="t" style="left:656.6px;top:615.0px;font-size:13.75px;line-height:17px;letter-spacing:-0.249px;">Red's Lawn and Snow</span>
<span class="t" style="left:822.0px;top:615.0px;font-size:13.75px;line-height:17px;letter-spacing:-0.093px;">$375.00</span>
<span class="t" style="left:941.4px;top:606.0px;font-size:13.75px;line-height:17px;letter-spacing:-0.006px;">120018005780</span>
<span class="t" style="left:941.4px;top:623.0px;font-size:13.75px;line-height:17px;letter-spacing:0.033px;">Invoice # <span style="color:#5f2c83">1716</span></span>
<span class="t" style="left:1070.5px;top:615.0px;font-size:13.75px;line-height:17px;letter-spacing:-0.158px;"><u>Registered</u></span>
<span class="t" style="left:1230.4px;top:615.0px;font-size:13.75px;line-height:17px;letter-spacing:0.392px;">2/26/2024</span>
<div style="position:absolute;left:1357.2px;top:616px;width:15.6px;height:15.6px;background:#f4f4f4;border:1px solid #d0d0d0;border-radius:2.500px"></div>
<div style="position:absolute;left:258.2px;top:643.4px;width:1569.4px;height:28.8px;background:#fff"></div>
<div style="position:absolute;left:296.8px;top:643.4px;width:1px;height:28.8px;background:#e2e2e2"></div>
<div style="position:absolute;left:393.9px;top:643.4px;width:1px;height:28.8px;background:#e2e2e2"></div>
<div style="position:absolute;left:460.9px;top:643.4px;width:1px;height:28.8px;background:#e2e2e2"></div>
<div style="position:absolute;left:631.3px;top:643.4px;width:1px;height:28.8px;background:#e2e2e2"></div>
<div style="position:absolute;left:816.6px;top:643.4px;width:1px;height:28.8px;background:#e2e2e2"></div>
<div style="position:absolute;left:936px;top:643.4px;width:1px;height:28.8px;background:#e2e2e2"></div>
<div style="position:absolute;left:1061.9px;top:643.4px;width:1px;height:28.8px;background:#e2e2e2"></div>
<div style="position:absolute;left:1225px;top:643.4px;width:1px;height:28.8px;background:#e2e2e2"></div>
<div style="position:absolute;left:1332.1px;top:643.4px;width:1px;height:28.8px;background:#e2e2e2"></div>
<div style="position:absolute;left:1397px;top:643.4px;width:1px;height:28.8px;background:#e2e2e2"></div>
<div style="position:absolute;left:1597.9px;top:643.4px;width:1px;height:28.8px;background:#e2e2e2"></div>
<div style="position:absolute;left:271px;top:650px;width:15px;height:15px;background:#fff;border:1.400px solid #777;border-radius:3px"></div>
<div style="position:absolute;left:304.2px;top:647.2px;width:22.4px;height:21.4px;background:linear-gradient(#fdfdfd,#e8e8e8);border:1px solid #cfcfcf;border-bottom-color:#b8b8b8;border-radius:4px;box-shadow:0 1px 1px rgba(0,0,0,.06);"><svg style="left:5.100px;top:3.600px" width="11.400" height="11.400" viewBox="0 0 11 11"><path d="M5.500 0.200c1.700 0 2.700 1.200 2.700 2.900c0 1.300-.6 2.500-1.300 3.100v.7c1.800.6 3.600 1.300 3.900 2.300v1.600h-10.600v-1.600c.3-1 2.100-1.700 3.900-2.300v-.7c-.7-.6-1.300-1.800-1.300-3.100c0-1.700 1-2.900 2.700-2.900z" fill="#1a1a1a"/></svg></div>
<div style="position:absolute;left:334.2px;top:647.2px;width:23.3px;height:21.4px;background:linear-gradient(#fdfdfd,#e8e8e8);border:1px solid #cfcfcf;border-bottom-color:#b8b8b8;border-radius:4px;box-shadow:0 1px 1px rgba(0,0,0,.06);"><svg style="left:5.400px;top:4px" width="12" height="11" viewBox="0 0 12 11"><path d="M7 2h-4.500a1.500 1.500 0 0 0-1.500 1.500v5a1.500 1.500 0 0 0 1.500 1.500h5a1.500 1.500 0 0 0 1.500-1.500v-2.500" fill="none" stroke="#1a1a1a" stroke-width="1.600"/><path d="M10.200 0l1.600 1.600l-5.300 5.300l-2.200.6l.6-2.200z" fill="#1a1a1a"/></svg></div>
<div style="position:absolute;left:365.3px;top:647.2px;width:22.4px;height:21.4px;background:linear-gradient(#fdfdfd,#e8e8e8);border:1px solid #cfcfcf;border-bottom-color:#b8b8b8;border-radius:4px;box-shadow:0 1px 1px rgba(0,0,0,.06);"><span style="position:absolute;left:0;top:0;width:100%;text-align:center;font-size:14px;line-height:19px;-webkit-text-stroke:0.4px;color:#1a1a1a">$</span></div>
<span class="t" style="left:399.3px;top:649.0px;font-size:13.75px;line-height:17px;letter-spacing:-0.101px;">344</span>
<span class="t" style="left:465.8px;top:649.0px;font-size:13.75px;line-height:17px;letter-spacing:-0.168px;">Lorna Klein</span>
<span class="t" style="left:635.6px;top:649.0px;font-size:13.75px;line-height:17px;letter-spacing:-0.218px;"><i style="color:#5f2c83"><u>(S)</u></i></span>
<span class="t" style="left:656.6px;top:649.0px;font-size:13.75px;line-height:17px;letter-spacing:-0.159px;">Lorna's Travel Agency</span>
<span class="t" style="left:822.0px;top:649.0px;font-size:13.75px;line-height:17px;letter-spacing:-0.093px;">$375.00</span>
<span class="t" style="left:941.4px;top:649.0px;font-size:13.75px;line-height:17px;color:#5f2c83;letter-spacing:-0.084px;">1854</span>
<span class="t" style="left:1070.5px;top:649.0px;font-size:13.75px;line-height:17px;letter-spacing:-0.158px;"><u>Registered</u></span>
<span class="t" style="left:1230.4px;top:649.0px;font-size:13.75px;line-height:17px;letter-spacing:0.392px;">2/26/2024</span>
<div style="position:absolute;left:1357.2px;top:649px;width:15.6px;height:15.6px;background:#f4f4f4;border:1px solid #d0d0d0;border-radius:2.500px"></div>
<div style="position:absolute;left:258.2px;top:672.2px;width:1569.4px;height:28.6px;background:#e4e4e4"></div>
<div style="position:absolute;left:296.8px;top:672.2px;width:1px;height:28.6px;background:#efefef"></div>
<div style="position:absolute;left:393.9px;top:672.2px;width:1px;height:28.6px;background:#efefef"></div>
<div style="position:absolute;left:460.9px;top:672.2px;width:1px;height:28.6px;background:#efefef"></div>
<div style="position:absolute;left:631.3px;top:672.2px;width:1px;height:28.6px;background:#efefef"></div>
<div style="position:absolute;left:816.6px;top:672.2px;width:1px;height:28.6px;background:#efefef"></div>
<div style="position:absolute;left:936px;top:672.2px;width:1px;height:28.6px;background:#efefef"></div>
<div style="position:absolute;left:1061.9px;top:672.2px;width:1px;height:28.6px;background:#efefef"></div>
<div style="position:absolute;left:1225px;top:672.2px;width:1px;height:28.6px;background:#efefef"></div>
<div style="position:absolute;left:1332.1px;top:672.2px;width:1px;height:28.6px;background:#efefef"></div>
<div style="position:absolute;left:1397px;top:672.2px;width:1px;height:28.6px;background:#efefef"></div>
<div style="position:absolute;left:1597.9px;top:672.2px;width:1px;height:28.6px;background:#efefef"></div>
<div style="position:absolute;left:271px;top:678px;width:15px;height:15px;background:#fff;border:1.400px solid #777;border-radius:3px"></div>
<div style="position:absolute;left:304.2px;top:675.9px;width:22.4px;height:21.4px;background:linear-gradient(#fdfdfd,#e8e8e8);border:1px solid #cfcfcf;border-bottom-color:#b8b8b8;border-radius:4px;box-shadow:0 1px 1px rgba(0,0,0,.06);opacity:.58;"><svg style="left:5.100px;top:3.600px" width="11.400" height="11.400" viewBox="0 0 11 11"><path d="M5.500 0.200c1.700 0 2.700 1.200 2.700 2.900c0 1.300-.6 2.500-1.300 3.100v.7c1.800.6 3.600 1.300 3.900 2.300v1.600h-10.600v-1.600c.3-1 2.100-1.700 3.900-2.300v-.7c-.7-.6-1.300-1.800-1.300-3.100c0-1.700 1-2.900 2.700-2.900z" fill="#1a1a1a"/></svg></div>
<div style="position:absolute;left:334.2px;top:675.9px;width:23.3px;height:21.4px;background:linear-gradient(#fdfdfd,#e8e8e8);border:1px solid #cfcfcf;border-bottom-color:#b8b8b8;border-radius:4px;box-shadow:0 1px 1px rgba(0,0,0,.06);opacity:.58;"><svg style="left:5.400px;top:4px" width="12" height="11" viewBox="0 0 12 11"><path d="M7 2h-4.500a1.500 1.500 0 0 0-1.500 1.500v5a1.500 1.500 0 0 0 1.500 1.500h5a1.500 1.500 0 0 0 1.500-1.500v-2.500" fill="none" stroke="#1a1a1a" stroke-width="1.600"/><path d="M10.200 0l1.600 1.600l-5.300 5.300l-2.200.6l.6-2.200z" fill="#1a1a1a"/></svg></div>
<div style="position:absolute;left:365.3px;top:675.9px;width:22.4px;height:21.4px;background:linear-gradient(#fdfdfd,#e8e8e8);border:1px solid #cfcfcf;border-bottom-color:#b8b8b8;border-radius:4px;box-shadow:0 1px 1px rgba(0,0,0,.06);opacity:.58;"><span style="position:absolute;left:0;top:0;width:100%;text-align:center;font-size:14px;line-height:19px;-webkit-text-stroke:0.4px;color:#1a1a1a">$</span></div>
<span class="t" style="left:399.3px;top:678.0px;font-size:13.75px;line-height:17px;letter-spacing:-0.101px;">315</span>
<span class="t" style="left:465.8px;top:678.0px;font-size:13.75px;line-height:17px;letter-spacing:-0.328px;">Don Caine</span>
<span class="t" style="left:635.8px;top:678.0px;font-size:13.75px;line-height:17px;letter-spacing:-0.248px;">Lifetime Eye Care</span>
<div style="position:absolute;left:1067px;top:677.1px;width:16.2px;height:17.8px;border:1.200px solid #3473a6;border-radius:4px"><svg style="left:3.500px;top:4.600px" width="7" height="7" viewBox="0 0 7 7"><path d="M3.500 0v7M0 3.500h7" stroke="#3a78a8" stroke-width="1.100"/></svg></div>
<span class="t" style="left:1090.2px;top:678.0px;font-size:13.75px;line-height:17px;letter-spacing:-0.096px;">Invite Declined</span>
<div style="position:absolute;left:1357.2px;top:678px;width:15.6px;height:15.6px;background:#f4f4f4;border:1px solid #d0d0d0;border-radius:2.500px"></div>
<div style="position:absolute;left:258.2px;top:700.8px;width:1569.4px;height:28.4px;background:#fff"></div>
<div style="position:absolute;left:296.8px;top:700.8px;width:1px;height:28.4px;background:#e2e2e2"></div>
<div style="position:absolute;left:393.9px;top:700.8px;width:1px;height:28.4px;background:#e2e2e2"></div>
<div style="position:absolute;left:460.9px;top:700.8px;width:1px;height:28.4px;background:#e2e2e2"></div>
<div style="position:absolute;left:631.3px;top:700.8px;width:1px;height:28.4px;background:#e2e2e2"></div>
<div style="position:absolute;left:816.6px;top:700.8px;width:1px;height:28.4px;background:#e2e2e2"></div>
<div style="position:absolute;left:936px;top:700.8px;width:1px;height:28.4px;background:#e2e2e2"></div>
<div style="position:absolute;left:1061.9px;top:700.8px;width:1px;height:28.4px;background:#e2e2e2"></div>
<div style="position:absolute;left:1225px;top:700.8px;width:1px;height:28.4px;background:#e2e2e2"></div>
<div style="position:absolute;left:1332.1px;top:700.8px;width:1px;height:28.4px;background:#e2e2e2"></div>
<div style="position:absolute;left:1397px;top:700.8px;width:1px;height:28.4px;background:#e2e2e2"></div>
<div style="position:absolute;left:1597.9px;top:700.8px;width:1px;height:28.4px;background:#e2e2e2"></div>
<div style="position:absolute;left:271px;top:707px;width:15px;height:15px;background:#fff;border:1.400px solid #777;border-radius:3px"></div>
<div style="position:absolute;left:304.2px;top:704.4px;width:22.4px;height:21.4px;background:linear-gradient(#fdfdfd,#e8e8e8);border:1px solid #cfcfcf;border-bottom-color:#b8b8b8;border-radius:4px;box-shadow:0 1px 1px rgba(0,0,0,.06);"><svg style="left:5.100px;top:3.600px" width="11.400" height="11.400" viewBox="0 0 11 11"><path d="M5.500 0.200c1.700 0 2.700 1.200 2.700 2.900c0 1.300-.6 2.500-1.300 3.100v.7c1.800.6 3.600 1.300 3.900 2.300v1.600h-10.600v-1.600c.3-1 2.100-1.700 3.900-2.300v-.7c-.7-.6-1.300-1.800-1.300-3.100c0-1.700 1-2.900 2.700-2.900z" fill="#1a1a1a"/></svg></div>
<div style="position:absolute;left:334.2px;top:704.4px;width:23.3px;height:21.4px;background:linear-gradient(#fdfdfd,#e8e8e8);border:1px solid #cfcfcf;border-bottom-color:#b8b8b8;border-radius:4px;box-shadow:0 1px 1px rgba(0,0,0,.06);"><svg style="left:5.400px;top:4px" width="12" height="11" viewBox="0 0 12 11"><path d="M7 2h-4.500a1.500 1.500 0 0 0-1.500 1.500v5a1.500 1.500 0 0 0 1.500 1.500h5a1.500 1.500 0 0 0 1.500-1.500v-2.500" fill="none" stroke="#1a1a1a" stroke-width="1.600"/><path d="M10.200 0l1.600 1.600l-5.300 5.300l-2.200.6l.6-2.200z" fill="#1a1a1a"/></svg></div>
<div style="position:absolute;left:365.3px;top:704.4px;width:22.4px;height:21.4px;background:linear-gradient(#e8524e,#c4302b);border:1px solid #b52b27;border-radius:4px;"><span style="position:absolute;left:0;top:0;width:100%;text-align:center;font-size:14px;line-height:19px;-webkit-text-stroke:0.4px;color:#fff">$</span></div>
<span class="t" style="left:399.3px;top:706.0px;font-size:13.75px;line-height:17px;letter-spacing:-0.101px;">339</span>
<span class="t" style="left:465.8px;top:706.0px;font-size:13.75px;line-height:17px;letter-spacing:-0.042px;">Jane Smith</span>
<span class="t" style="left:635.8px;top:706.0px;font-size:13.75px;line-height:17px;letter-spacing:-0.306px;">Happy Days Child Care</span>
<span class="t" style="left:822.0px;top:706.0px;font-size:13.75px;line-height:17px;color:#9c1c1f;letter-spacing:-0.139px;">$37.50</span>
<span class="t" style="left:941.4px;top:706.0px;font-size:13.75px;line-height:17px;color:#5f2c83;letter-spacing:-0.084px;">1715</span>
<span class="t" style="left:1070.5px;top:706.0px;font-size:13.75px;line-height:17px;letter-spacing:-0.158px;"><u>Registered</u></span>
<span class="t" style="left:1230.4px;top:706.0px;font-size:13.75px;line-height:17px;letter-spacing:0.392px;">2/23/2024</span>
<div style="position:absolute;left:1357.2px;top:707px;width:15.6px;height:15.6px;background:#f4f4f4;border:1px solid #d0d0d0;border-radius:2.500px"></div>
<div style="position:absolute;left:258.2px;top:729.2px;width:1569.4px;height:28px;background:#e4e4e4"></div>
<div style="position:absolute;left:296.8px;top:729.2px;width:1px;height:28px;background:#efefef"></div>
<div style="position:absolute;left:393.9px;top:729.2px;width:1px;height:28px;background:#efefef"></div>
<div style="position:absolute;left:460.9px;top:729.2px;width:1px;height:28px;background:#efefef"></div>
<div style="position:absolute;left:631.3px;top:729.2px;width:1px;height:28px;background:#efefef"></div>
<div style="position:absolute;left:816.6px;top:729.2px;width:1px;height:28px;background:#efefef"></div>
<div style="position:absolute;left:936px;top:729.2px;width:1px;height:28px;background:#efefef"></div>
<div style="position:absolute;left:1061.9px;top:729.2px;width:1px;height:28px;background:#efefef"></div>
<div style="position:absolute;left:1225px;top:729.2px;width:1px;height:28px;background:#efefef"></div>
<div style="position:absolute;left:1332.1px;top:729.2px;width:1px;height:28px;background:#efefef"></div>
<div style="position:absolute;left:1397px;top:729.2px;width:1px;height:28px;background:#efefef"></div>
<div style="position:absolute;left:1597.9px;top:729.2px;width:1px;height:28px;background:#efefef"></div>
<div style="position:absolute;left:271px;top:735px;width:15px;height:15px;background:#fff;border:1.400px solid #777;border-radius:3px"></div>
<div style="position:absolute;left:304.2px;top:732.6px;width:22.4px;height:21.4px;background:linear-gradient(#fdfdfd,#e8e8e8);border:1px solid #cfcfcf;border-bottom-color:#b8b8b8;border-radius:4px;box-shadow:0 1px 1px rgba(0,0,0,.06);"><svg style="left:5.100px;top:3.600px" width="11.400" height="11.400" viewBox="0 0 11 11"><path d="M5.500 0.200c1.700 0 2.700 1.200 2.700 2.900c0 1.300-.6 2.500-1.300 3.100v.7c1.800.6 3.600 1.300 3.900 2.300v1.600h-10.600v-1.600c.3-1 2.100-1.700 3.900-2.300v-.7c-.7-.6-1.300-1.800-1.300-3.100c0-1.700 1-2.900 2.700-2.900z" fill="#1a1a1a"/></svg></div>
<div style="position:absolute;left:334.2px;top:732.6px;width:23.3px;height:21.4px;background:linear-gradient(#fdfdfd,#e8e8e8);border:1px solid #cfcfcf;border-bottom-color:#b8b8b8;border-radius:4px;box-shadow:0 1px 1px rgba(0,0,0,.06);"><svg style="left:5.400px;top:4px" width="12" height="11" viewBox="0 0 12 11"><path d="M7 2h-4.500a1.500 1.500 0 0 0-1.500 1.500v5a1.500 1.500 0 0 0 1.500 1.500h5a1.500 1.500 0 0 0 1.500-1.500v-2.500" fill="none" stroke="#1a1a1a" stroke-width="1.600"/><path d="M10.200 0l1.600 1.600l-5.300 5.300l-2.200.6l.6-2.200z" fill="#1a1a1a"/></svg></div>
<div style="position:absolute;left:365.3px;top:732.6px;width:22.4px;height:21.4px;background:linear-gradient(#e8524e,#c4302b);border:1px solid #b52b27;border-radius:4px;"><span style="position:absolute;left:0;top:0;width:100%;text-align:center;font-size:14px;line-height:19px;-webkit-text-stroke:0.4px;color:#fff">$</span></div>
<span class="t" style="left:399.3px;top:734.0px;font-size:13.75px;line-height:17px;letter-spacing:-0.101px;">341</span>
<span class="t" style="left:465.8px;top:734.0px;font-size:13.75px;line-height:17px;letter-spacing:-0.123px;">Gary Johnson</span>
<span class="t" style="left:635.8px;top:734.0px;font-size:13.75px;line-height:17px;letter-spacing:-0.277px;">Gary's Guitars</span>
<span class="t" style="left:822.0px;top:734.0px;font-size:13.75px;line-height:17px;color:#9c1c1f;letter-spacing:-0.139px;">$63.75</span>
<span class="t" style="left:941.4px;top:734.0px;font-size:13.75px;line-height:17px;color:#5f2c83;letter-spacing:-0.084px;">1714</span>
<span class="t" style="left:1070.5px;top:734.0px;font-size:13.75px;line-height:17px;letter-spacing:-0.158px;"><u>Registered</u></span>
<span class="t" style="left:1230.4px;top:734.0px;font-size:13.75px;line-height:17px;letter-spacing:0.392px;">2/23/2024</span>
<div style="position:absolute;left:1357.2px;top:735px;width:15.6px;height:15.6px;background:#f4f4f4;border:1px solid #d0d0d0;border-radius:2.500px"></div>
<div style="position:absolute;left:258.2px;top:757.2px;width:1569.4px;height:28px;background:#fff"></div>
<div style="position:absolute;left:296.8px;top:757.2px;width:1px;height:28px;background:#e2e2e2"></div>
<div style="position:absolute;left:393.9px;top:757.2px;width:1px;height:28px;background:#e2e2e2"></div>
<div style="position:absolute;left:460.9px;top:757.2px;width:1px;height:28px;background:#e2e2e2"></div>
<div style="position:absolute;left:631.3px;top:757.2px;width:1px;height:28px;background:#e2e2e2"></div>
<div style="position:absolute;left:816.6px;top:757.2px;width:1px;height:28px;background:#e2e2e2"></div>
<div style="position:absolute;left:936px;top:757.2px;width:1px;height:28px;background:#e2e2e2"></div>
<div style="position:absolute;left:1061.9px;top:757.2px;width:1px;height:28px;background:#e2e2e2"></div>
<div style="position:absolute;left:1225px;top:757.2px;width:1px;height:28px;background:#e2e2e2"></div>
<div style="position:absolute;left:1332.1px;top:757.2px;width:1px;height:28px;background:#e2e2e2"></div>
<div style="position:absolute;left:1397px;top:757.2px;width:1px;height:28px;background:#e2e2e2"></div>
<div style="position:absolute;left:1597.9px;top:757.2px;width:1px;height:28px;background:#e2e2e2"></div>
<div style="position:absolute;left:271px;top:763px;width:15px;height:15px;background:#fff;border:1.400px solid #777;border-radius:3px"></div>
<div style="position:absolute;left:304.2px;top:760.6px;width:22.4px;height:21.4px;background:linear-gradient(#fdfdfd,#e8e8e8);border:1px solid #cfcfcf;border-bottom-color:#b8b8b8;border-radius:4px;box-shadow:0 1px 1px rgba(0,0,0,.06);"><svg style="left:5.100px;top:3.600px" width="11.400" height="11.400" viewBox="0 0 11 11"><path d="M5.500 0.200c1.700 0 2.700 1.200 2.700 2.900c0 1.300-.6 2.500-1.300 3.100v.7c1.800.6 3.600 1.300 3.900 2.300v1.600h-10.600v-1.600c.3-1 2.100-1.700 3.900-2.300v-.7c-.7-.6-1.300-1.800-1.300-3.100c0-1.700 1-2.900 2.700-2.900z" fill="#1a1a1a"/></svg></div>
<div style="position:absolute;left:334.2px;top:760.6px;width:23.3px;height:21.4px;background:linear-gradient(#fdfdfd,#e8e8e8);border:1px solid #cfcfcf;border-bottom-color:#b8b8b8;border-radius:4px;box-shadow:0 1px 1px rgba(0,0,0,.06);"><svg style="left:5.400px;top:4px" width="12" height="11" viewBox="0 0 12 11"><path d="M7 2h-4.500a1.500 1.500 0 0 0-1.500 1.500v5a1.500 1.500 0 0 0 1.500 1.500h5a1.500 1.500 0 0 0 1.500-1.500v-2.500" fill="none" stroke="#1a1a1a" stroke-width="1.600"/><path d="M10.200 0l1.600 1.600l-5.300 5.300l-2.200.6l.6-2.200z" fill="#1a1a1a"/></svg></div>
<div style="position:absolute;left:365.3px;top:760.6px;width:22.4px;height:21.4px;background:linear-gradient(#e8524e,#c4302b);border:1px solid #b52b27;border-radius:4px;"><span style="position:absolute;left:0;top:0;width:100%;text-align:center;font-size:14px;line-height:19px;-webkit-text-stroke:0.4px;color:#fff">$</span></div>
<span class="t" style="left:399.3px;top:763.0px;font-size:13.75px;line-height:17px;letter-spacing:-0.101px;">343</span>
<span class="t" style="left:465.8px;top:763.0px;font-size:13.75px;line-height:17px;letter-spacing:-0.098px;">Charles Thomas</span>
<span class="t" style="left:635.6px;top:763.0px;font-size:13.75px;line-height:17px;letter-spacing:-0.218px;"><i style="color:#5f2c83"><u>(S)</u></i></span>
<span class="t" style="left:656.6px;top:763.0px;font-size:13.75px;line-height:17px;letter-spacing:-0.293px;">Gabby's Dry Cleaning</span>
<span class="t" style="left:822.0px;top:763.0px;font-size:13.75px;line-height:17px;color:#9c1c1f;letter-spacing:-0.093px;">$375.00</span>
<span class="t" style="left:941.4px;top:763.0px;font-size:13.75px;line-height:17px;color:#5f2c83;letter-spacing:-0.084px;">1853</span>
<span class="t" style="left:1070.5px;top:763.0px;font-size:13.75px;line-height:17px;letter-spacing:-0.158px;"><u>Registered</u></span>
<span class="t" style="left:1230.4px;top:763.0px;font-size:13.75px;line-height:17px;letter-spacing:0.392px;">2/26/2024</span>
<div style="position:absolute;left:1357.2px;top:763px;width:15.6px;height:15.6px;background:#f4f4f4;border:1px solid #d0d0d0;border-radius:2.500px"></div>
<div style="position:absolute;left:258.2px;top:785.2px;width:1569.4px;height:28.8px;background:#e4e4e4"></div>
<div style="position:absolute;left:296.8px;top:785.2px;width:1px;height:28.8px;background:#efefef"></div>
<div style="position:absolute;left:393.9px;top:785.2px;width:1px;height:28.8px;background:#efefef"></div>
<div style="position:absolute;left:460.9px;top:785.2px;width:1px;height:28.8px;background:#efefef"></div>
<div style="position:absolute;left:631.3px;top:785.2px;width:1px;height:28.8px;background:#efefef"></div>
<div style="position:absolute;left:816.6px;top:785.2px;width:1px;height:28.8px;background:#efefef"></div>
<div style="position:absolute;left:936px;top:785.2px;width:1px;height:28.8px;background:#efefef"></div>
<div style="position:absolute;left:1061.9px;top:785.2px;width:1px;height:28.8px;background:#efefef"></div>
<div style="position:absolute;left:1225px;top:785.2px;width:1px;height:28.8px;background:#efefef"></div>
<div style="position:absolute;left:1332.1px;top:785.2px;width:1px;height:28.8px;background:#efefef"></div>
<div style="position:absolute;left:1397px;top:785.2px;width:1px;height:28.8px;background:#efefef"></div>
<div style="position:absolute;left:1597.9px;top:785.2px;width:1px;height:28.8px;background:#efefef"></div>
<div style="position:absolute;left:271px;top:791px;width:15px;height:15px;background:#fff;border:1.400px solid #777;border-radius:3px"></div>
<div style="position:absolute;left:304.2px;top:789px;width:22.4px;height:21.4px;background:linear-gradient(#fdfdfd,#e8e8e8);border:1px solid #cfcfcf;border-bottom-color:#b8b8b8;border-radius:4px;box-shadow:0 1px 1px rgba(0,0,0,.06);"><svg style="left:5.100px;top:3.600px" width="11.400" height="11.400" viewBox="0 0 11 11"><path d="M5.500 0.200c1.700 0 2.700 1.200 2.700 2.900c0 1.300-.6 2.500-1.300 3.100v.7c1.800.6 3.600 1.300 3.900 2.300v1.600h-10.600v-1.600c.3-1 2.100-1.700 3.900-2.300v-.7c-.7-.6-1.300-1.800-1.300-3.100c0-1.700 1-2.900 2.700-2.900z" fill="#1a1a1a"/></svg></div>
<div style="position:absolute;left:334.2px;top:789px;width:23.3px;height:21.4px;background:linear-gradient(#fdfdfd,#e8e8e8);border:1px solid #cfcfcf;border-bottom-color:#b8b8b8;border-radius:4px;box-shadow:0 1px 1px rgba(0,0,0,.06);"><svg style="left:5.400px;top:4px" width="12" height="11" viewBox="0 0 12 11"><path d="M7 2h-4.500a1.500 1.500 0 0 0-1.500 1.500v5a1.500 1.500 0 0 0 1.500 1.500h5a1.500 1.500 0 0 0 1.500-1.500v-2.500" fill="none" stroke="#1a1a1a" stroke-width="1.600"/><path d="M10.200 0l1.600 1.600l-5.300 5.300l-2.200.6l.6-2.200z" fill="#1a1a1a"/></svg></div>
<div style="position:absolute;left:365.3px;top:789px;width:22.4px;height:21.4px;background:linear-gradient(#e8524e,#c4302b);border:1px solid #b52b27;border-radius:4px;"><span style="position:absolute;left:0;top:0;width:100%;text-align:center;font-size:14px;line-height:19px;-webkit-text-stroke:0.4px;color:#fff">$</span></div>
<span class="t" style="left:399.3px;top:791.0px;font-size:13.75px;line-height:17px;letter-spacing:-0.101px;">314</span>
<span class="t" style="left:465.8px;top:791.0px;font-size:13.75px;line-height:17px;letter-spacing:-0.092px;">Emma Thomas</span>
<span class="t" style="left:635.8px;top:791.0px;font-size:13.75px;line-height:17px;letter-spacing:-0.187px;">Emma's Kitchen</span>
<span class="t" style="left:822.0px;top:791.0px;font-size:13.75px;line-height:17px;color:#9c1c1f;letter-spacing:-0.139px;">$37.50</span>
<span class="t" style="left:941.4px;top:791.0px;font-size:13.75px;line-height:17px;color:#5f2c83;letter-spacing:-0.084px;">1527</span>
<div style="position:absolute;left:1067px;top:790.2px;width:16.2px;height:17.8px;border:1.200px solid #3473a6;border-radius:4px"><svg style="left:3.500px;top:4.600px" width="7" height="7" viewBox="0 0 7 7"><path d="M3.500 0v7M0 3.500h7" stroke="#3a78a8" stroke-width="1.100"/></svg></div>
<span class="t" style="left:1090.2px;top:791.0px;font-size:13.75px;line-height:17px;letter-spacing:-0.241px;">Canceled</span>
<span class="t" style="left:1230.4px;top:791.0px;font-size:13.75px;line-height:17px;letter-spacing:0.421px;">11/17/2023</span>
<div style="position:absolute;left:1357.2px;top:791px;width:15.6px;height:15.6px;background:#f4f4f4;border:1px solid #d0d0d0;border-radius:2.500px"></div>
<div style="position:absolute;left:258.2px;top:814px;width:1569.4px;height:28.2px;background:#fff"></div>
<div style="position:absolute;left:296.8px;top:814px;width:1px;height:28.2px;background:#e2e2e2"></div>
<div style="position:absolute;left:393.9px;top:814px;width:1px;height:28.2px;background:#e2e2e2"></div>
<div style="position:absolute;left:460.9px;top:814px;width:1px;height:28.2px;background:#e2e2e2"></div>
<div style="position:absolute;left:631.3px;top:814px;width:1px;height:28.2px;background:#e2e2e2"></div>
<div style="position:absolute;left:816.6px;top:814px;width:1px;height:28.2px;background:#e2e2e2"></div>
<div style="position:absolute;left:936px;top:814px;width:1px;height:28.2px;background:#e2e2e2"></div>
<div style="position:absolute;left:1061.9px;top:814px;width:1px;height:28.2px;background:#e2e2e2"></div>
<div style="position:absolute;left:1225px;top:814px;width:1px;height:28.2px;background:#e2e2e2"></div>
<div style="position:absolute;left:1332.1px;top:814px;width:1px;height:28.2px;background:#e2e2e2"></div>
<div style="position:absolute;left:1397px;top:814px;width:1px;height:28.2px;background:#e2e2e2"></div>
<div style="position:absolute;left:1597.9px;top:814px;width:1px;height:28.2px;background:#e2e2e2"></div>
<div style="position:absolute;left:271px;top:820px;width:15px;height:15px;background:#fff;border:1.400px solid #777;border-radius:3px"></div>
<div style="position:absolute;left:304.2px;top:817.5px;width:22.4px;height:21.4px;background:linear-gradient(#fdfdfd,#e8e8e8);border:1px solid #cfcfcf;border-bottom-color:#b8b8b8;border-radius:4px;box-shadow:0 1px 1px rgba(0,0,0,.06);opacity:.58;"><svg style="left:5.100px;top:3.600px" width="11.400" height="11.400" viewBox="0 0 11 11"><path d="M5.500 0.200c1.700 0 2.700 1.200 2.700 2.900c0 1.300-.6 2.500-1.300 3.100v.7c1.800.6 3.600 1.300 3.900 2.300v1.600h-10.600v-1.600c.3-1 2.100-1.700 3.900-2.300v-.7c-.7-.6-1.300-1.800-1.300-3.100c0-1.700 1-2.900 2.700-2.900z" fill="#1a1a1a"/></svg></div>
<div style="position:absolute;left:334.2px;top:817.5px;width:23.3px;height:21.4px;background:linear-gradient(#fdfdfd,#e8e8e8);border:1px solid #cfcfcf;border-bottom-color:#b8b8b8;border-radius:4px;box-shadow:0 1px 1px rgba(0,0,0,.06);opacity:.58;"><svg style="left:5.400px;top:4px" width="12" height="11" viewBox="0 0 12 11"><path d="M7 2h-4.500a1.500 1.500 0 0 0-1.500 1.500v5a1.500 1.500 0 0 0 1.500 1.500h5a1.500 1.500 0 0 0 1.500-1.500v-2.500" fill="none" stroke="#1a1a1a" stroke-width="1.600"/><path d="M10.200 0l1.600 1.600l-5.300 5.300l-2.200.6l.6-2.200z" fill="#1a1a1a"/></svg></div>
<div style="position:absolute;left:365.3px;top:817.5px;width:22.4px;height:21.4px;background:linear-gradient(#fdfdfd,#e8e8e8);border:1px solid #cfcfcf;border-bottom-color:#b8b8b8;border-radius:4px;box-shadow:0 1px 1px rgba(0,0,0,.06);opacity:.58;"><span style="position:absolute;left:0;top:0;width:100%;text-align:center;font-size:14px;line-height:19px;-webkit-text-stroke:0.4px;color:#1a1a1a">$</span></div>
<span class="t" style="left:399.3px;top:819.0px;font-size:13.75px;line-height:17px;letter-spacing:-0.101px;">340</span>
<span class="t" style="left:465.8px;top:819.0px;font-size:13.75px;line-height:17px;letter-spacing:-0.236px;">Shane Koglin</span>
<span class="t" style="left:635.8px;top:819.0px;font-size:13.75px;line-height:17px;letter-spacing:-0.087px;">Custom Cabinets</span>
<div style="position:absolute;left:1067px;top:818.7px;width:16.2px;height:17.8px;border:1.200px solid #3473a6;border-radius:4px"><svg style="left:3.500px;top:4.600px" width="7" height="7" viewBox="0 0 7 7"><path d="M3.500 0v7M0 3.500h7" stroke="#3a78a8" stroke-width="1.100"/></svg></div>
<span class="t" style="left:1090.2px;top:819.0px;font-size:13.75px;line-height:17px;letter-spacing:-0.096px;">Invite Declined</span>
<div style="position:absolute;left:1357.2px;top:820px;width:15.6px;height:15.6px;background:#f4f4f4;border:1px solid #d0d0d0;border-radius:2.500px"></div>
<div style="position:absolute;left:258.2px;top:842.2px;width:1569.4px;height:38.8px;background:#e4e4e4"></div>
<div style="position:absolute;left:296.8px;top:842.2px;width:1px;height:38.8px;background:#efefef"></div>
<div style="position:absolute;left:393.9px;top:842.2px;width:1px;height:38.8px;background:#efefef"></div>
<div style="position:absolute;left:460.9px;top:842.2px;width:1px;height:38.8px;background:#efefef"></div>
<div style="position:absolute;left:631.3px;top:842.2px;width:1px;height:38.8px;background:#efefef"></div>
<div style="position:absolute;left:816.6px;top:842.2px;width:1px;height:38.8px;background:#efefef"></div>
<div style="position:absolute;left:936px;top:842.2px;width:1px;height:38.8px;background:#efefef"></div>
<div style="position:absolute;left:1061.9px;top:842.2px;width:1px;height:38.8px;background:#efefef"></div>
<div style="position:absolute;left:1225px;top:842.2px;width:1px;height:38.8px;background:#efefef"></div>
<div style="position:absolute;left:1332.1px;top:842.2px;width:1px;height:38.8px;background:#efefef"></div>
<div style="position:absolute;left:1397px;top:842.2px;width:1px;height:38.8px;background:#efefef"></div>
<div style="position:absolute;left:1597.9px;top:842.2px;width:1px;height:38.8px;background:#efefef"></div>
<div style="position:absolute;left:271px;top:854px;width:15px;height:15px;background:#fff;border:1.400px solid #777;border-radius:3px"></div>
<div style="position:absolute;left:304.2px;top:851.8px;width:22.4px;height:21.4px;background:linear-gradient(#fdfdfd,#e8e8e8);border:1px solid #cfcfcf;border-bottom-color:#b8b8b8;border-radius:4px;box-shadow:0 1px 1px rgba(0,0,0,.06);"><svg style="left:5.100px;top:3.600px" width="11.400" height="11.400" viewBox="0 0 11 11"><path d="M5.500 0.200c1.700 0 2.700 1.200 2.700 2.900c0 1.300-.6 2.500-1.300 3.100v.7c1.800.6 3.600 1.300 3.900 2.300v1.600h-10.600v-1.600c.3-1 2.100-1.700 3.900-2.300v-.7c-.7-.6-1.300-1.800-1.300-3.100c0-1.700 1-2.900 2.700-2.900z" fill="#1a1a1a"/></svg></div>
<div style="position:absolute;left:334.2px;top:851.8px;width:23.3px;height:21.4px;background:linear-gradient(#fdfdfd,#e8e8e8);border:1px solid #cfcfcf;border-bottom-color:#b8b8b8;border-radius:4px;box-shadow:0 1px 1px rgba(0,0,0,.06);"><svg style="left:5.400px;top:4px" width="12" height="11" viewBox="0 0 12 11"><path d="M7 2h-4.500a1.500 1.500 0 0 0-1.500 1.500v5a1.500 1.500 0 0 0 1.500 1.500h5a1.500 1.500 0 0 0 1.500-1.500v-2.500" fill="none" stroke="#1a1a1a" stroke-width="1.600"/><path d="M10.200 0l1.600 1.600l-5.300 5.300l-2.200.6l.6-2.200z" fill="#1a1a1a"/></svg></div>
<div style="position:absolute;left:365.3px;top:851.8px;width:22.4px;height:21.4px;background:linear-gradient(#fdfdfd,#e8e8e8);border:1px solid #cfcfcf;border-bottom-color:#b8b8b8;border-radius:4px;box-shadow:0 1px 1px rgba(0,0,0,.06);"><span style="position:absolute;left:0;top:0;width:100%;text-align:center;font-size:14px;line-height:19px;-webkit-text-stroke:0.4px;color:#1a1a1a">$</span></div>
<span class="t" style="left:399.3px;top:853.0px;font-size:13.75px;line-height:17px;letter-spacing:-0.101px;">346</span>
<span class="t" style="left:465.8px;top:853.0px;font-size:13.75px;line-height:17px;letter-spacing:-0.149px;">Big Foot</span>
<span class="t" style="left:635.6px;top:853.0px;font-size:13.75px;line-height:17px;letter-spacing:-0.218px;"><i style="color:#5f2c83"><u>(S)</u></i></span>
<span class="t" style="left:656.6px;top:853.0px;font-size:13.75px;line-height:17px;letter-spacing:-0.256px;">Big Foot Shoe Shop</span>
<span class="t" style="left:822.0px;top:853.0px;font-size:13.75px;line-height:17px;letter-spacing:-0.093px;">$375.00</span>
<span class="t" style="left:941.4px;top:844.0px;font-size:13.75px;line-height:17px;letter-spacing:-0.006px;">120018005810</span>
<span class="t" style="left:941.4px;top:861.0px;font-size:13.75px;line-height:17px;letter-spacing:0.033px;">Invoice # <span style="color:#5f2c83">1717</span></span>
<span class="t" style="left:1070.5px;top:853.0px;font-size:13.75px;line-height:17px;letter-spacing:-0.158px;"><u>Registered</u></span>
<span class="t" style="left:1230.4px;top:853.0px;font-size:13.75px;line-height:17px;letter-spacing:0.392px;">2/26/2024</span>
<div style="position:absolute;left:1357.2px;top:854px;width:15.6px;height:15.6px;background:#f4f4f4;border:1px solid #d0d0d0;border-radius:2.500px"></div>
<div style="position:absolute;left:1029.9px;top:490.1px;width:169.3px;height:112.6px;background:#fff;border-radius:6px;box-shadow:0 3px 8px rgba(0,0,0,.32),0 12px 40px 4px rgba(0,0,0,.27);overflow:hidden"><div style="position:absolute;left:0;top:0;width:100%;height:22.600px;background:#1967d2"></div></div>
<span class="t" style="left:1035.6px;top:489.0px;font-size:17.5px;line-height:22px;color:#fff;letter-spacing:0.090px;">Show All</span>
<span class="t" style="left:1035.6px;top:512.0px;font-size:17.5px;line-height:22px;color:#000;letter-spacing:0.151px;">Invitation Declined</span>
<span class="t" style="left:1035.6px;top:534.0px;font-size:17.5px;line-height:22px;color:#000;letter-spacing:0.080px;">Registered</span>
<span class="t" style="left:1035.6px;top:557.0px;font-size:17.5px;line-height:22px;color:#000;letter-spacing:0.073px;">Canceled</span>
<span class="t" style="left:1035.6px;top:579.0px;font-size:17.5px;line-height:22px;color:#000;letter-spacing:0.115px;">Incomplete</span>
<div style="position:absolute;left:951px;top:441px;width:270px;height:197px;border:5px solid #fb4040"></div>
<div style="position:absolute;left:1848px;top:408px;width:51px;height:180.5px;background:#43196e;border-radius:6px 0 0 6px;box-shadow:-1px 3px 6px rgba(0,0,0,.35)"><svg style="left:16px;top:142.800px" width="20" height="20" viewBox="0 0 20 20"><g fill="none" stroke="#e6dcef" stroke-width="1.100"><circle cx="10" cy="10" r="9.300"/><circle cx="10" cy="10" r="4.800"/><path d="M3.400 3.400l3.200 3.200M16.600 3.400l-3.200 3.200M3.400 16.600l3.200-3.200M16.600 16.600l-3.200-3.200"/></g></svg></div>
<div style="position:absolute;left:1860.8px;top:539.8px;width:0;height:0"><div id="nh" class="t" style="left:0;top:0;transform-origin:0 0;transform:rotate(-90deg);font-size:21px;line-height:26px;font-weight:bold;color:#fff;letter-spacing:-0.100px">Need Help?</div></div>
<div style="position:absolute;left:188px;top:71px;width:1px;height:797px;background:#fff"></div>
<div style="position:absolute;left:188px;top:867px;width:1715px;height:1px;background:#fff"></div>
<div style="position:absolute;left:1899px;top:71px;width:4px;height:797px;background:#f1f1f1"></div>
<div style="position:absolute;left:1900.8px;top:92px;width:2.2px;height:367.5px;background:#c1c1c1"></div></div>
</div>
</body>
</html>
